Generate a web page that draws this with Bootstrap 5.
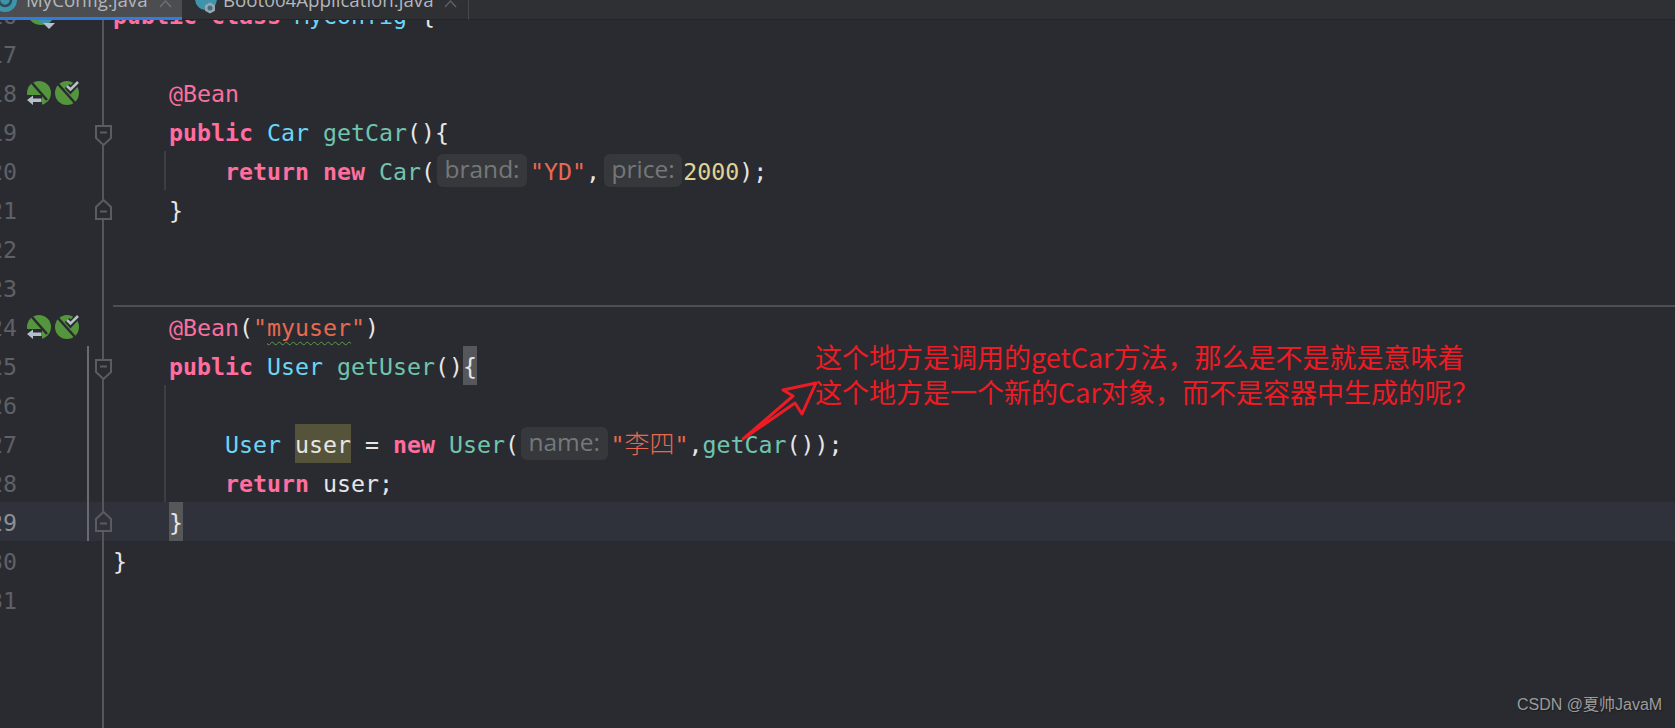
<!DOCTYPE html>
<html lang="zh">
<head>
<meta charset="utf-8">
<title>MyConfig.java</title>
<link href="https://cdn.jsdelivr.net/npm/bootstrap@5.3.0/dist/css/bootstrap.min.css" rel="stylesheet">
<style>
html,body{height:100%;margin:0;background:#2a2b31;overflow:hidden}
.ide{height:728px;position:relative;overflow:hidden;background:#2a2b31;--fb:#2a2b31}
.tabbar{height:20px;flex:none;background:#2f3033;position:relative;z-index:2;overflow:hidden;box-shadow:inset 0 -1px 0 #232428}
.ide-tab{height:20px;flex:none;position:relative;overflow:hidden;font:18.7px/28px "Open Sans","Liberation Sans",sans-serif;color:#b4b7ba}
.lbl{position:absolute;top:-14px;white-space:nowrap}
.tab-a{width:182px;background:#4b4d51;border-bottom:3px solid #2f7de1}
.tab-a .lbl{left:26px}
.tab-b{width:287px;border-right:1px solid #46474a;box-shadow:inset 0 -1px 0 #232428}
.tab-b .lbl{left:41px}
.tab-ic{position:absolute}
.ic-a{left:-7px;top:-12px}
.ic-b{left:12px;top:-10px}
.tab-x{position:absolute;top:0}
.tab-a .tab-x{left:159px}
.tab-b .tab-x{left:262px}
.editor{flex:1 1 auto;min-height:0;overflow:hidden;display:flex;flex-direction:column}
.lines{margin-top:-25px;flex:1 1 auto;display:flex;flex-direction:column}
.ln{height:39px;display:flex;flex:none;font:23.25px/41px "DejaVu Sans Mono","Noto Sans CJK SC",monospace;color:#e6e6e6;white-space:pre}
.ln.cur{background:#2f323b;--fb:#2f323b}
.ln.tail{flex:1 1 auto}
.num{width:17px;flex:none;display:flex;justify-content:flex-end;color:#5d6166;overflow:hidden}
.ln.cur .num{color:#8b9096}
.num b{font-weight:400;flex:none}
.gicon{width:28px;flex:none;display:flex;align-items:center}
.gicon.first,.gicon.blank-a{margin-left:10px}
.spc-a{width:4px;flex:none}
.chg{width:2px;flex:none;margin-right:6px}
.chg.on{background:#6a6b6e}
.fold{width:18px;flex:none;background:linear-gradient(#55565a,#55565a) no-repeat 7px 0/2px 100%;display:flex;align-items:center}
.fold-fill{fill:var(--fb)}
.fd{margin-top:7px}
.src{flex:1 1 auto;min-width:0}
.src.rule{border-bottom:2px solid #4e4f52}
.src.guide{background:linear-gradient(#3d3e43,#3d3e43) no-repeat 51px 0/2px 100%}
.kw{color:#ff6e9e;font-weight:700}
.ann{color:#f96f9d}
.ty{color:#6bd6f7}
.fn{color:#6fc5ae}
.str{color:#e8694f}
.nbr{color:#e4d38f}
.cjk{font-size:25px;line-height:1;font-family:"Noto Sans CJK SC",sans-serif;font-weight:300}
.hint{display:inline-block;height:33px;line-height:30px;vertical-align:top;margin:3px 3px 0 2px;padding:0 7.5px;background:#37383c;border-radius:6px;color:#74787a;font-family:"Open Sans","Liberation Sans",sans-serif;font-size:24.5px}
.hint.later{margin-left:4px;margin-right:1px}
.hl{background:#55533a;display:inline-block;height:39px;vertical-align:top}
.brace{background:#56575b;display:inline-block;height:39px;vertical-align:top}
.warn{text-decoration:underline wavy #5c9a4c 1px;text-underline-offset:5px}
.callout{position:absolute;left:815px;top:339px;color:#ed1c24;font:27px/35px "Noto Sans CJK SC","Liberation Sans",sans-serif;white-space:nowrap;z-index:3}
.arrow{position:absolute;left:0;top:0;z-index:3;pointer-events:none}
.wm{position:absolute;left:1517px;top:695px;color:#9c9c9c;font:16px/20px "Liberation Sans","Noto Sans CJK SC",sans-serif;text-shadow:1px 1px 1px #1c1c1c;white-space:nowrap;z-index:3}
</style>
</head>
<body>
<svg width="0" height="0" class="position-absolute">
<defs>
<symbol id="fd" viewBox="0 0 17 21"><path class="fold-fill" d="M1 1H16V13L8.5 20 1 13Z" stroke="#5b5c60" stroke-width="2"/><path d="M5 7.5H12" stroke="#5b5c60" stroke-width="2"/></symbol>
<symbol id="fu" viewBox="0 0 17 21"><path class="fold-fill" d="M1 20H16V8L8.5 1 1 8Z" stroke="#5b5c60" stroke-width="2"/><path d="M5 12.5H12" stroke="#5b5c60" stroke-width="2"/></symbol>
<symbol id="ga" viewBox="0 0 24 24"><circle cx="12" cy="12" r="12" fill="#54953d"/><path d="M5 2 20 19" stroke="#2a2b31" stroke-width="2.5"/><path d="M0 14H15V24H0Z" fill="#2a2b31"/><path d="M0 19 6 14.5V17.5H14.5V21H6V24Z" fill="#b5c0cc"/></symbol>
<symbol id="gb" viewBox="0 0 24 24"><circle cx="12" cy="12" r="12" fill="#54953d"/><path d="M3 3 20 22" stroke="#2a2b31" stroke-width="2.5"/><path d="M12 5 15.5 9 23 1" fill="none" stroke="#2a2b31" stroke-width="6"/><path d="M12 5 15.5 8.5 23 1" fill="none" stroke="#b9c0c8" stroke-width="2.6"/></symbol>
<symbol id="gc" viewBox="0 0 28 39"><circle cx="14" cy="16" r="14" fill="#54953d"/><circle cx="18" cy="21" r="8" fill="#3f93ab"/><path d="M16 28H28L22 34Z" fill="#b5c0cc"/></symbol>
</defs>
</svg>
<div class="ide d-flex flex-column">
  <div class="tabbar d-flex">
    <div class="ide-tab tab-a">
      <svg class="tab-ic ic-a" width="24" height="24" viewBox="0 0 24 24"><circle cx="12" cy="12" r="12" fill="#3f93ab"/><circle cx="12" cy="12" r="6" fill="none" stroke="#2f4c57" stroke-width="2.5"/></svg>
      <span class="lbl">MyConfig.java</span>
      <svg class="tab-x" width="13" height="8" viewBox="0 0 13 8"><path d="M1 7 6.500 1 12 7" fill="none" stroke="#6d6f72" stroke-width="1.500"/></svg>
    </div>
    <div class="ide-tab tab-b">
      <svg class="tab-ic ic-b" width="24" height="24" viewBox="0 0 24 24"><circle cx="12" cy="9" r="11" fill="#3f93ab"/><path d="M16 12.500 21 15.250V20.750L16 23.500 11 20.750V15.250Z" fill="#9aa5ad"/><circle cx="16" cy="18" r="2.500" fill="#3f6f85"/></svg>
      <span class="lbl">Boot004Application.java</span>
      <svg class="tab-x" width="13" height="8" viewBox="0 0 13 8"><path d="M1 7 6.500 1 12 7" fill="none" stroke="#5c5e61" stroke-width="1.500"/></svg>
    </div>
  </div>
  <div class="editor">
    <div class="lines">
      <div class="ln"><div class="num"><b>16</b></div><div class="gicon first"><svg width="28" height="39"><use href="#gc"/></svg></div><div class="gicon"></div><div class="spc-a"></div><div class="chg"></div><div class="fold"></div><div class="src"><span class="kw">public</span> <span class="kw">class</span> <span class="ty">MyConfig</span> {</div></div>
      <div class="ln"><div class="num"><b>17</b></div><div class="gicon blank-a"></div><div class="gicon"></div><div class="spc-a"></div><div class="chg"></div><div class="fold"></div><div class="src"></div></div>
      <div class="ln"><div class="num"><b>18</b></div><div class="gicon first"><svg width="24" height="24"><use href="#ga"/></svg></div><div class="gicon"><svg width="24" height="24"><use href="#gb"/></svg></div><div class="spc-a"></div><div class="chg"></div><div class="fold"></div><div class="src">    <span class="ann">@Bean</span></div></div>
      <div class="ln"><div class="num"><b>19</b></div><div class="gicon blank-a"></div><div class="gicon"></div><div class="spc-a"></div><div class="chg"></div><div class="fold"><svg class="fd" width="17" height="21"><use href="#fd"/></svg></div><div class="src">    <span class="kw">public</span> <span class="ty">Car</span> <span class="fn">getCar</span>(){</div></div>
      <div class="ln"><div class="num"><b>20</b></div><div class="gicon blank-a"></div><div class="gicon"></div><div class="spc-a"></div><div class="chg"></div><div class="fold"></div><div class="src guide">        <span class="kw">return</span> <span class="kw">new</span> <span class="fn">Car</span>(<span class="hint">brand:</span><span class="str">"YD"</span>,<span class="hint later">price:</span><span class="nbr">2000</span>);</div></div>
      <div class="ln"><div class="num"><b>21</b></div><div class="gicon blank-a"></div><div class="gicon"></div><div class="spc-a"></div><div class="chg"></div><div class="fold"><svg width="17" height="21"><use href="#fu"/></svg></div><div class="src">    }</div></div>
      <div class="ln"><div class="num"><b>22</b></div><div class="gicon blank-a"></div><div class="gicon"></div><div class="spc-a"></div><div class="chg"></div><div class="fold"></div><div class="src"></div></div>
      <div class="ln"><div class="num"><b>23</b></div><div class="gicon blank-a"></div><div class="gicon"></div><div class="spc-a"></div><div class="chg"></div><div class="fold"></div><div class="src rule"></div></div>
      <div class="ln"><div class="num"><b>24</b></div><div class="gicon first"><svg width="24" height="24"><use href="#ga"/></svg></div><div class="gicon"><svg width="24" height="24"><use href="#gb"/></svg></div><div class="spc-a"></div><div class="chg"></div><div class="fold"></div><div class="src">    <span class="ann">@Bean</span>(<span class="str">"<span class="warn">myuser</span>"</span>)</div></div>
      <div class="ln"><div class="num"><b>25</b></div><div class="gicon blank-a"></div><div class="gicon"></div><div class="spc-a"></div><div class="chg on"></div><div class="fold"><svg class="fd" width="17" height="21"><use href="#fd"/></svg></div><div class="src">    <span class="kw">public</span> <span class="ty">User</span> <span class="fn">getUser</span>()<span class="brace">{</span></div></div>
      <div class="ln"><div class="num"><b>26</b></div><div class="gicon blank-a"></div><div class="gicon"></div><div class="spc-a"></div><div class="chg on"></div><div class="fold"></div><div class="src guide"></div></div>
      <div class="ln"><div class="num"><b>27</b></div><div class="gicon blank-a"></div><div class="gicon"></div><div class="spc-a"></div><div class="chg on"></div><div class="fold"></div><div class="src guide">        <span class="ty">User</span> <span class="hl">user</span> = <span class="kw">new</span> <span class="fn">User</span>(<span class="hint">name:</span><span class="str">"<span class="cjk">李四</span>"</span>,<span class="fn">getCar</span>());</div></div>
      <div class="ln"><div class="num"><b>28</b></div><div class="gicon blank-a"></div><div class="gicon"></div><div class="spc-a"></div><div class="chg on"></div><div class="fold"></div><div class="src guide">        <span class="kw">return</span> user;</div></div>
      <div class="ln cur"><div class="num"><b>29</b></div><div class="gicon blank-a"></div><div class="gicon"></div><div class="spc-a"></div><div class="chg on"></div><div class="fold"><svg width="17" height="21"><use href="#fu"/></svg></div><div class="src">    <span class="brace">}</span></div></div>
      <div class="ln"><div class="num"><b>30</b></div><div class="gicon blank-a"></div><div class="gicon"></div><div class="spc-a"></div><div class="chg"></div><div class="fold"></div><div class="src">}</div></div>
      <div class="ln"><div class="num"><b>31</b></div><div class="gicon blank-a"></div><div class="gicon"></div><div class="spc-a"></div><div class="chg"></div><div class="fold"></div><div class="src"></div></div>
      <div class="ln tail"><div class="num"></div><div class="gicon blank-a"></div><div class="gicon"></div><div class="spc-a"></div><div class="chg"></div><div class="fold"></div><div class="src"></div></div>
    </div>
  </div>
  <svg class="arrow" width="1675" height="728" viewBox="0 0 1675 728">
    <path d="M743 439 793 396 783 390 816 383 802 414 795 403Z" fill="none" stroke="#ed1c24" stroke-width="3" stroke-linejoin="round"/>
  </svg>
  <div class="callout">这个地方是调用的getCar方法，那么是不是就是意味着<br>这个地方是一个新的Car对象，而不是容器中生成的呢？</div>
  <div class="wm">CSDN @夏帅JavaM</div>
</div>
</body>
</html>
